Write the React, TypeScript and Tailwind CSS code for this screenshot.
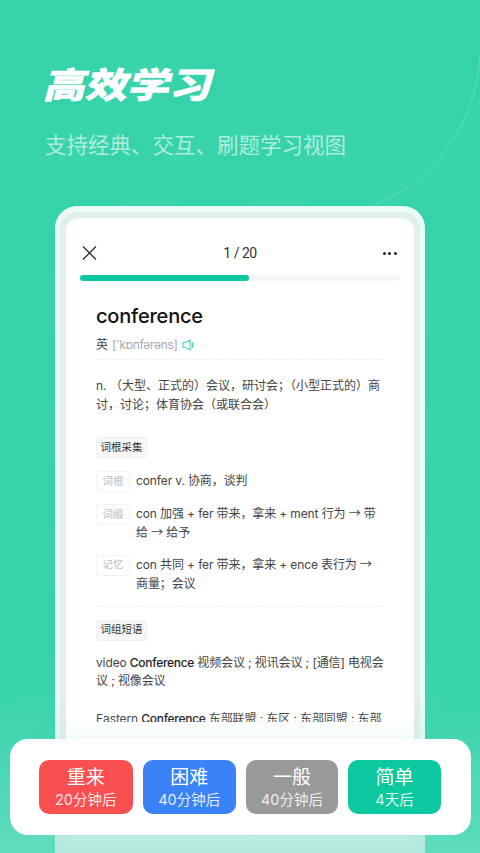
import React from 'react';

const BODY = "font-['Inter','Noto_Sans_CJK_SC',sans-serif]";

const Tag: React.FC<{ children: React.ReactNode }> = ({ children }) => (
  <span className="flex h-[21px] w-[51px] items-center justify-center rounded-[3px] border border-[#eff0f3] bg-[#f7f7f9] text-[10.5px] text-[#333]">
    {children}
  </span>
);

const Arrow: React.FC = () => <span className="font-['Noto_Sans_CJK_SC'] leading-none">→</span>;

const Row: React.FC<{ label: string; children: React.ReactNode }> = ({ label, children }) => (
  <div className="flex items-start">
    <span className="mr-[6px] flex h-[21px] w-[34px] shrink-0 items-center justify-center rounded-[3px] border border-[#f3f3f3] text-[10.5px] text-[#bdbdbd]">
      {label}
    </span>
    <p className="mt-px text-[12px] leading-[18.7px] tracking-[-0.12px] text-[#444]">{children}</p>
  </div>
);

const Strong: React.FC = () => <b className="font-medium tracking-[-0.3px] text-[#222]">Conference</b>;

const RateButton: React.FC<{ title: string; sub: string; color: string; width: string }> = ({ title, sub, color, width }) => (
  <div className={`flex h-[54px] flex-col items-center justify-center rounded-[10px] text-white ${color} ${width}`}>
    <span className="text-[19px] leading-[24px]">{title}</span>
    <span className="text-[14.5px] leading-[19px] opacity-85">{sub}</span>
  </div>
);

export default function App() {
  return (
    <div className={`relative h-[853px] w-[480px] overflow-hidden bg-[#36d3ab] ${BODY}`}>
      <div className="absolute inset-0 bg-[repeating-linear-gradient(135deg,rgba(255,255,255,0)_0px,rgba(255,255,255,0)_50px,rgba(255,255,255,0.014)_50px,rgba(255,255,255,0.014)_90px)]" />
      <svg className="absolute left-0 top-0" width="480" height="210" fill="none">
        <path d="M480 55A171 171 0 0 1 373 206" stroke="#ffffff" strokeOpacity="0.18" />
      </svg>

      <div className="relative flex h-full flex-col px-[45px] pt-[59px]">
        <h1 className="h-[52px] origin-left skew-x-[-12deg] scale-y-[0.84] pl-[1px] text-[42px] font-black leading-[52px] text-white [-webkit-text-stroke:0.6px_white]">
          高效学习
        </h1>
        <p className="mt-[19px] text-[21.5px] leading-[30px] text-white/60">支持经典、交互、刷题学习视图</p>

        <div className="mx-[10px] mt-[46px] min-h-0 flex-1 rounded-t-[22px] bg-white/90 px-[5px] pt-[6px]">
          <div className="h-full rounded-t-[17px] bg-[#e2eeea] px-[6px] pt-[6px]">
            <div className="h-full overflow-hidden rounded-t-[13px] bg-white">
              <div className="mt-[26px] flex h-[18px] items-center justify-between pl-[15px] pr-[17px]">
                <svg width="16" height="16" viewBox="0 0 16 16" fill="none" stroke="#222" strokeWidth="1.2">
                  <path d="M2 1.500l13 13M15 1.500L2 14.500" />
                </svg>
                <span className="font-['Roboto'] text-[14px] tracking-[-0.5px] text-[#333]">1 / 20</span>
                <span className="flex gap-[2.5px]">
                  <i className="h-[3px] w-[3px] rounded-full bg-[#222]" />
                  <i className="h-[3px] w-[3px] rounded-full bg-[#222]" />
                  <i className="h-[3px] w-[3px] rounded-full bg-[#222]" />
                </span>
              </div>
              <div className="mx-[14px] mt-[12.5px] h-[6.500px] rounded-full bg-[#f6f6f6]">
                <div className="h-full w-[169px] rounded-full bg-[#0bc8a0]" />
              </div>

              <div className="px-[30px]">
                <h2 className="mt-[20px] text-[20px] font-medium leading-[30px] tracking-[-0.2px] text-[#111]">conference</h2>
                <div className="mt-[4px] flex h-[20px] items-center text-[12px]">
                  <span className="text-[#444]">英</span>
                  <span className="ml-[4px] tracking-[-0.3px] text-[#aaa]">['kɒnfərəns]</span>
                  <svg className="ml-[4px]" width="13" height="12" viewBox="0 0 13 12" fill="none" stroke="#4fd6bf" strokeWidth="1.100">
                    <path d="M1 3.500h2.500L8 1.200v9.600L3.500 8.500H1z" />
                    <path d="M10.500 3.200v5.600" strokeWidth="2" />
                  </svg>
                </div>
                <div className="mt-[4px] border-t border-dashed border-[#ececec]" />

                <p className="mt-[17px] text-[12px] leading-[18.7px] text-[#444]">
                  n. （大型、正式的）会议，研讨会；（小型正式的）商讨，讨论；体育协会（或联合会）
                </p>

                <div className="mt-[23px] flex">
                  <Tag>词根采集</Tag>
                </div>
                <div className="mt-[13px] flex flex-col gap-[12px]">
                  <Row label="词根">confer v. 协商，谈判</Row>
                  <Row label="词缀">con 加强 + fer 带来，拿来 + ment 行为 <Arrow /> 带给 <Arrow /> 给予</Row>
                  <Row label="记忆">con 共同 + fer 带来，拿来 + ence 表行为 <Arrow /> 商量；会议</Row>
                </div>
                <div className="mt-[12.5px] border-t border-dashed border-[#f0f0f0]" />

                <div className="mt-[13px] flex">
                  <Tag>词组短语</Tag>
                </div>
                <p className="mt-[13px] text-[12px] leading-[18.7px] tracking-[-0.12px] text-[#444]">
                  video <Strong /> 视频会议 ; 视讯会议 ; [通信] 电视会议 ; 视像会议
                </p>
                <p className="mt-[19px] text-[12px] leading-[18.7px] tracking-[-0.12px] text-[#444]">
                  Eastern <Strong /> 东部联盟 ; 东区 ; 东部同盟 ; 东部
                </p>
              </div>
            </div>
          </div>
        </div>
      </div>

      {/* bottom fade of the card and the page */}
      <div className="absolute inset-x-0 bottom-0 h-[165px] bg-gradient-to-b from-white/0 to-white/20" />
      <div className="absolute bottom-0 left-[55px] h-[153px] w-[11px] bg-gradient-to-b from-[#b2e8da]/0 to-[#b2e8da]" />
      <div className="absolute bottom-0 left-[414px] h-[153px] w-[11px] bg-gradient-to-b from-[#b2e8da]/0 to-[#b2e8da]" />
      <div className="absolute bottom-0 left-[66px] h-[131px] w-[348px] bg-gradient-to-b from-[#fdfffe] to-[#b2e8da]" />

      <div className="absolute bottom-[18px] left-[10px] flex h-[96px] w-[461px] items-center gap-[10px] rounded-[18px] bg-white pl-[29px]">
        <RateButton title="重来" sub="20分钟后" color="bg-[#f84f51]" width="w-[93.500px]" />
        <RateButton title="困难" sub="40分钟后" color="bg-[#3b82f6]" width="w-[93.500px]" />
        <RateButton title="一般" sub="40分钟后" color="bg-[#999999]" width="w-[92px]" />
        <RateButton title="简单" sub="4天后" color="bg-[#0bc8a0]" width="w-[93px]" />
      </div>
    </div>
  );
}
